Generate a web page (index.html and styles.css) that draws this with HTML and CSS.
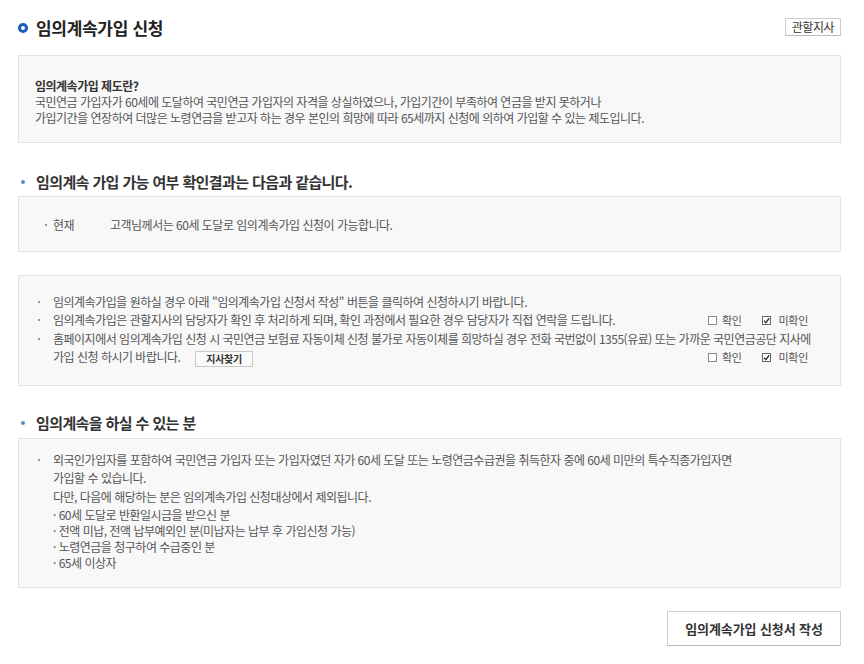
FILE: index.html
```html
<!DOCTYPE html>
<html lang="ko">
<head>
    <meta charset="UTF-8">
    <meta name="viewport" content="width=device-width, initial-scale=1.0">
    <title>임의계속가입 신청</title>
    <link rel="stylesheet" href="styles.css">
</head>
<body>
    <div class="page">
        <div class="title-row">
            <h1 class="page-title">임의계속가입 신청</h1>
            <button type="button" class="btn-small">관할지사</button>
        </div>

        <div class="box box-intro">
            <strong>임의계속가입 제도란?</strong><br>
            국민연금 가입자가 60세에 도달하여 국민연금 가입자의 자격을 상실하였으나, 가입기간이 부족하여 연금을 받지 못하거나<br>
            가입기간을 연장하여 더많은 노령연금을 받고자 하는 경우 본인의 희망에 따라 65세까지 신청에 의하여 가입할 수 있는 제도입니다.
        </div>

        <h2 class="sub-title">임의계속 가입 가능 여부 확인결과는 다음과 같습니다.</h2>
        <div class="box box-result">
            <ul class="dot-list">
                <li><span class="label">현재</span>고객님께서는 60세 도달로 임의계속가입 신청이 가능합니다.</li>
            </ul>
        </div>

        <div class="box box-notice">
            <ul class="dot-list">
                <li>임의계속가입을 원하실 경우 아래 "임의계속가입 신청서 작성" 버튼을 클릭하여 신청하시기 바랍니다.</li>
                <li class="line">
                    <span>임의계속가입은 관할지사의 담당자가 확인 후 처리하게 되며, 확인 과정에서 필요한 경우 담당자가 직접 연락을 드립니다.</span>
                    <span class="checks">
                        <span class="chk"><svg width="9" height="9" viewBox="0 0 9 9"><rect x="0.5" y="0.5" width="8" height="8" fill="#fff" stroke="#8a8a8a"/></svg></span>확인
                        <span class="chk on"><svg width="9" height="9" viewBox="0 0 9 9"><rect x="0.5" y="0.5" width="8" height="8" fill="#fff" stroke="#666"/><path d="M2 4.6 L3.8 6.6 L7.2 2.2" fill="none" stroke="#333" stroke-width="1.4"/></svg></span>미확인
                    </span>
                </li>
                <li>
                    <span class="nowrap">홈페이지에서 임의계속가입 신청 시 국민연금 보험료 자동이체 신청 불가로 자동이체를 희망하실 경우 전화 국번없이 1355(유료) 또는 가까운 국민연금공단 지사에</span>
                    <div class="line">
                        <span>가입 신청 하시기 바랍니다. <button type="button" class="btn-find">지사찾기</button></span>
                        <span class="checks">
                            <span class="chk"><svg width="9" height="9" viewBox="0 0 9 9"><rect x="0.5" y="0.5" width="8" height="8" fill="#fff" stroke="#8a8a8a"/></svg></span>확인
                            <span class="chk on"><svg width="9" height="9" viewBox="0 0 9 9"><rect x="0.5" y="0.5" width="8" height="8" fill="#fff" stroke="#666"/><path d="M2 4.6 L3.8 6.6 L7.2 2.2" fill="none" stroke="#333" stroke-width="1.4"/></svg></span>미확인
                        </span>
                    </div>
                </li>
            </ul>
        </div>

        <h2 class="sub-title sub-title-2">임의계속을 하실 수 있는 분</h2>
        <div class="box box-target">
            <ul class="dot-list">
                <li>
                    외국인가입자를 포함하여 국민연금 가입자 또는 가입자였던 자가 60세 도달 또는 노령연금수급권을 취득한자 중에 60세 미만의 특수직종가입자면<br>
                    가입할 수 있습니다.<br>
                    다만, 다음에 해당하는 분은 임의계속가입 신청대상에서 제외됩니다.
                    <ul class="sub-list">
                        <li>· 60세 도달로 반환일시금을 받으신 분</li>
                        <li>· 전액 미납, 전액 납부예외인 분(미납자는 납부 후 가입신청 가능)</li>
                        <li>· 노령연금을 청구하여 수급중인 분</li>
                        <li>· 65세 이상자</li>
                    </ul>
                </li>
            </ul>
        </div>

        <div class="btn-area">
            <button type="button" class="btn-apply">임의계속가입 신청서 작성</button>
        </div>
    </div>
</body>
</html>
```

FILE: styles.css
```css
/* 임의계속가입 신청 */
*, *::before, *::after {
    box-sizing: border-box;
}
body {
    margin: 0;
    font-family: "Noto Sans CJK KR", "Malgun Gothic", sans-serif;
    font-size: 12px;
    letter-spacing: -0.5px;
    color: #555;
    background: #fff;
}
button {
    font-family: inherit;
    letter-spacing: inherit;
    cursor: pointer;
}
ul {
    margin: 0;
    padding: 0;
    list-style: none;
}
.nowrap {
    white-space: nowrap;
}
.page {
    padding: 18px 23px 0 18px;
}

/* 제목 */
.title-row {
    display: flex;
    justify-content: space-between;
    align-items: flex-start;
}
.page-title {
    position: relative;
    margin: 0;
    padding-left: 18px;
    font-size: 17px;
    line-height: 20px;
    letter-spacing: -0.3px;
    color: #222;
}
.page-title::before {
    content: "";
    position: absolute;
    left: 0;
    top: 5px;
    width: 10px;
    height: 10px;
    border: 3px solid #1a5cc0;
    border-radius: 50%;
}
.btn-small {
    height: 18px;
    padding: 0 6px;
    border: 1px solid #ccc;
    border-bottom-color: #bbb;
    background: #fff;
    font-size: 12px;
    line-height: 16px;
    color: #333;
}
.sub-title {
    position: relative;
    margin: 29px 0 4px;
    padding-left: 18px;
    font-size: 15px;
    line-height: 20px;
    letter-spacing: -0.6px;
    color: #333;
}
.sub-title::before {
    content: "";
    position: absolute;
    left: 3px;
    top: 8px;
    width: 4px;
    height: 4px;
    border-radius: 50%;
    background: #5b87cf;
}
.sub-title-2 {
    margin-top: 27px;
    margin-bottom: 5px;
}

/* 회색 박스 */
.box {
    border: 1px solid #e4e4e4;
    background: #f8f8f8;
}
.box-intro {
    margin-top: 17px;
    padding: 22px 16px 16px;
    line-height: 16px;
}
.box-intro strong {
    color: #333;
}
.box-result {
    padding: 19px 19px 17px;
    line-height: 18px;
}
.box-notice {
    margin-top: 23px;
    padding: 17px 32px 18px 19px;
    line-height: 18.3px;
}
.box-target {
    padding: 12px 19px 17px;
    line-height: 18.5px;
}
.dot-list > li {
    position: relative;
    padding-left: 15px;
}
.dot-list > li::before {
    content: "";
    position: absolute;
    left: 0;
    top: 8px;
    width: 2px;
    height: 2px;
    background: #999;
}
.box-result .dot-list > li::before {
    left: 7px;
}
.label {
    display: inline-block;
    width: 57px;
}
.sub-list {
    margin-top: 1px;
    line-height: 15.8px;
}

/* 확인 / 미확인 */
.line {
    display: flex;
    justify-content: space-between;
    align-items: center;
}
.checks {
    display: inline-flex;
    align-items: center;
    white-space: nowrap;
    font-size: 11px;
    letter-spacing: -0.3px;
}
.chk {
    display: inline-flex;
    margin-right: 5px;
}
.chk.on {
    margin-left: 20px;
    margin-right: 8px;
}
.btn-find {
    height: 16px;
    margin-left: 12px;
    padding: 0 10px;
    border: 1px solid #c8c8c8;
    background: #fafafa;
    font-size: 10px;
    font-weight: bold;
    line-height: 14px;
    letter-spacing: -0.3px;
    color: #333;
    vertical-align: middle;
}

/* 하단 버튼 */
.btn-area {
    display: flex;
    justify-content: flex-end;
    margin-top: 23px;
}
.btn-apply {
    width: 174px;
    height: 35px;
    border: 1px solid #ccc;
    border-bottom-color: #bbb;
    background: #fff;
    font-size: 13px;
    font-weight: bold;
    letter-spacing: -0.1px;
    color: #333;
}
```
